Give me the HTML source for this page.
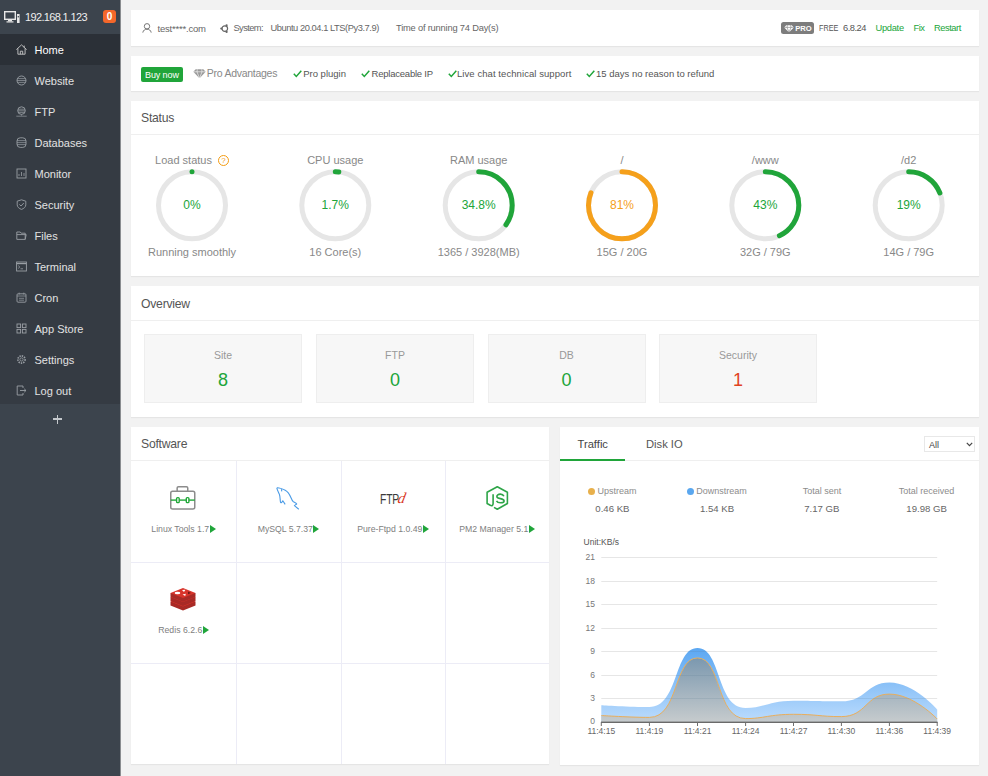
<!DOCTYPE html>
<html><head><meta charset="utf-8">
<style>
*{margin:0;padding:0;box-sizing:border-box}
html,body{width:988px;height:776px;overflow:hidden}
body{background:#f2f2f2;font-family:"Liberation Sans",sans-serif;position:relative;color:#666;line-height:1}
.a{position:absolute;white-space:nowrap;line-height:1}
#side{position:absolute;left:0;top:0;width:120px;height:776px;background:#3c444d}
#side .hd{position:absolute;left:0;top:0;width:120px;height:34px;background:#3c444d}
#side .menu{position:absolute;left:0;top:34px;width:120px;height:370px;background:#353b43}
#side .it{position:absolute;left:0;width:120px;height:31px}
#side .it.cur{background:#2b3037}
#side .it span{position:absolute;left:34.5px;top:11.1px;font-size:11px;color:#e2e2e2;line-height:1}
#side .it.cur span{color:#fff}
#side .it svg{position:absolute;left:16px;top:10px;width:11px;height:11px}
.edge{position:absolute;left:120px;top:0;width:1px;height:776px;background:#8a8d90}
.card{position:absolute;background:#fff;box-shadow:0 1px 1px rgba(0,0,0,0.05)}
.card .ttl{position:absolute;left:10px;font-size:12.2px;color:#555;letter-spacing:-0.24px}
.card .hl{position:absolute;left:0;right:0;height:1px;background:#efefef}
.gr{color:#20a53a}
.t1{font-size:9.3px;color:#666}
.t2{font-size:9.5px;color:#555}
.gt{font-size:11px;color:#888;text-align:center}
.gp{font-size:12px;text-align:center}
.gs{font-size:11px;color:#888;text-align:center}
.ob{width:158px;height:69px;background:#f7f7f7;border:1px solid #eeeeee}
.ol{left:0;width:156px;text-align:center;font-size:10.5px;color:#999}
.ov{left:0;width:156px;text-align:center;font-size:18px}
.vl{background:#ececf6}
.sl{text-align:center;font-size:8.7px;color:#808080}
.tri{display:inline-block;margin-left:0.5px;vertical-align:0px;position:relative;top:0.5px}
.stl{text-align:center;font-size:9px;color:#8c8c8c}
.stv{text-align:center;font-size:9.6px;color:#666}
.dot{display:inline-block;width:7px;height:7px;border-radius:50%;margin-right:2px;vertical-align:-0.5px}
.yl{text-align:right;font-size:8.5px;color:#777}
.xl{text-align:center;font-size:8.5px;color:#666}
</style>
<style>.qi{display:inline-block;width:11px;height:11px;border:1px solid #f39c12;border-radius:50%;color:#f39c12;font-size:8px;line-height:9px;text-align:center;margin-left:6px;vertical-align:1px}</style>
</head>
<body>
<div id="side">
  <div class="hd">
    <svg class="a" style="left:4px;top:11px" width="16" height="12" viewBox="0 0 16 12"><rect x="0.7" y="0.7" width="10.6" height="7.6" fill="none" stroke="#e8e8e8" stroke-width="1.4"/><rect x="4" y="9" width="4" height="1.3" fill="#e8e8e8"/><rect x="2.5" y="10.3" width="7" height="1.2" fill="#e8e8e8"/><rect x="13" y="3" width="2.6" height="9" fill="#e8e8e8"/><rect x="13.7" y="5" width="1.2" height="1.4" fill="#3c444d"/></svg>
    <div class="a" style="left:25px;top:11.7px;font-size:11px;color:#eeeeee;letter-spacing:-0.65px">192.168.1.123</div>
    <div class="a" style="left:103px;top:10px;width:13px;height:13px;border-radius:3px;background:#f4672a;color:#fff;font-size:10px;line-height:13px;text-align:center;font-weight:bold">0</div>
  </div>
  <div class="menu">
    <div class="it cur" style="top:0"><svg viewBox="0 0 11 11"><path d="M0.4 5.6 L5.5 0.9 L10.6 5.6 M1.9 4.4 V10.2 H9.1 V4.4 M4.3 10.2 V7.2 H6.7 V10.2 M8.2 1.6 V3.6" fill="none" stroke="#c8c8c8" stroke-width="0.9"/></svg><span>Home</span></div>
    <div class="it" style="top:31px"><svg viewBox="0 0 11 11"><circle cx="5.5" cy="5.5" r="4.5" fill="none" stroke="#9a9fa5" stroke-width="0.9"/><path d="M1.4 3.6 H9.6 M1 5.5 H10 M1.4 7.4 H9.6" fill="none" stroke="#9a9fa5" stroke-width="0.7"/></svg><span>Website</span></div>
    <div class="it" style="top:62px"><svg viewBox="0 0 11 11"><circle cx="5.5" cy="4.6" r="3.8" fill="none" stroke="#9a9fa5" stroke-width="0.9"/><path d="M2 3.2 H9 M1.8 4.8 H9.2 M2.2 6.4 H8.8 M5.5 8.4 V9.6 M0.3 10.2 H10.7" fill="none" stroke="#9a9fa5" stroke-width="0.7"/></svg><span>FTP</span></div>
    <div class="it" style="top:93px"><svg viewBox="0 0 11 11"><rect x="1" y="0.8" width="9" height="9.6" rx="3.2" fill="none" stroke="#9a9fa5" stroke-width="0.9"/><path d="M1 3.6 H10 M1 5.6 H10 M1 7.6 H10" fill="none" stroke="#9a9fa5" stroke-width="0.7"/></svg><span>Databases</span></div>
    <div class="it" style="top:124px"><svg viewBox="0 0 11 11"><rect x="1" y="1" width="9" height="9" fill="none" stroke="#9a9fa5" stroke-width="0.9"/><path d="M3 8 V6 M5.5 8 V4 M8 8 V5" fill="none" stroke="#9a9fa5" stroke-width="0.8"/></svg><span>Monitor</span></div>
    <div class="it" style="top:155px"><svg viewBox="0 0 11 11"><path d="M5.5 0.8 L9.8 2.2 V5.8 C9.8 8 7.8 9.6 5.5 10.4 C3.2 9.6 1.2 8 1.2 5.8 V2.2 Z" fill="none" stroke="#9a9fa5" stroke-width="0.9"/><path d="M3.4 5.4 L5 7 L7.8 4" fill="none" stroke="#9a9fa5" stroke-width="0.9"/></svg><span>Security</span></div>
    <div class="it" style="top:186px"><svg viewBox="0 0 11 11"><path d="M0.8 2 H4.2 L5.2 3.2 H9.2 V9.4 H0.8 Z M0.8 4.6 H10.2 L9.2 9.4" fill="none" stroke="#9a9fa5" stroke-width="0.9"/></svg><span>Files</span></div>
    <div class="it" style="top:217px"><svg viewBox="0 0 11 11"><rect x="0.6" y="1" width="9.8" height="9" fill="none" stroke="#9a9fa5" stroke-width="0.9"/><path d="M0.6 2.6 H10.4" stroke="#9a9fa5" stroke-width="1.2"/><path d="M2.2 4.6 L3.8 6 L2.2 7.4 M4.5 7.8 H7" fill="none" stroke="#9a9fa5" stroke-width="0.8"/></svg><span>Terminal</span></div>
    <div class="it" style="top:248px"><svg viewBox="0 0 11 11"><rect x="1" y="1.8" width="9" height="8.4" rx="1" fill="none" stroke="#9a9fa5" stroke-width="0.9"/><path d="M1 4 H10 M3.2 0.6 V2.6 M7.8 0.6 V2.6 M3 6.3 H8 M3 8.2 H8" fill="none" stroke="#9a9fa5" stroke-width="0.7"/></svg><span>Cron</span></div>
    <div class="it" style="top:279px"><svg viewBox="0 0 11 11"><rect x="1" y="1" width="3.6" height="3.6" fill="none" stroke="#9a9fa5" stroke-width="0.9"/><rect x="6.4" y="1" width="3.6" height="3.6" fill="none" stroke="#9a9fa5" stroke-width="0.9"/><rect x="1" y="6.4" width="3.6" height="3.6" fill="none" stroke="#9a9fa5" stroke-width="0.9"/><rect x="6.4" y="6.4" width="3.6" height="3.6" fill="none" stroke="#9a9fa5" stroke-width="0.9"/></svg><span>App Store</span></div>
    <div class="it" style="top:310px"><svg viewBox="0 0 11 11"><circle cx="5.5" cy="5.5" r="3.6" fill="none" stroke="#9a9fa5" stroke-width="1.6" stroke-dasharray="1.4 1"/><circle cx="5.5" cy="5.5" r="1.6" fill="none" stroke="#9a9fa5" stroke-width="0.8"/></svg><span>Settings</span></div>
    <div class="it" style="top:341px"><svg viewBox="0 0 11 11"><path d="M7 3 V1 H1.2 V10 H7 V8" fill="none" stroke="#9a9fa5" stroke-width="0.9"/><path d="M4 5.5 H10 M8.2 3.8 L10 5.5 L8.2 7.2" fill="none" stroke="#9a9fa5" stroke-width="0.9"/></svg><span>Log out</span></div>
  </div>
  <div class="a" style="left:52.8px;top:414.5px;width:9px;height:9px"><div class="a" style="left:0;top:3.9px;width:9px;height:1.2px;background:#c4c8cc"></div><div class="a" style="left:3.9px;top:0;width:1.2px;height:9px;background:#c4c8cc"></div></div>
</div>
<div class="edge"></div>
<div class="card" style="left:131px;top:10px;width:848px;height:36px">
  <svg class="a" style="left:10.5px;top:13px" width="10" height="10" viewBox="0 0 10 10"><circle cx="5" cy="3.3" r="2.7" fill="none" stroke="#777" stroke-width="1"/><path d="M0.8 9.6 C1.2 7.2 3 6.2 5 6.2 C7 6.2 8.8 7.2 9.2 9.6" fill="none" stroke="#777" stroke-width="1"/></svg>
  <div class="a t1" style="left:26.5px;top:13.8px;font-size:9.5px;letter-spacing:-0.2px">test****.com</div>
  <svg class="a" style="left:88.5px;top:13.5px" width="9" height="9" viewBox="0 0 9 9"><circle cx="4.8" cy="4.6" r="2.8" fill="none" stroke="#666" stroke-width="1.2"/><circle cx="1.3" cy="4.6" r="1.1" fill="#666"/><circle cx="6.6" cy="1.3" r="1.1" fill="#666"/><circle cx="6.6" cy="7.9" r="1.1" fill="#666"/></svg>
  <div class="a t1" style="left:102.5px;top:13.9px;letter-spacing:-0.6px">System:</div>
  <div class="a t1" style="left:139.5px;top:13.9px;letter-spacing:-0.44px">Ubuntu 20.04.1 LTS(Py3.7.9)</div>
  <div class="a t1" style="left:265px;top:13.9px;letter-spacing:-0.19px">Time of running 74 Day(s)</div>
  <div class="a" style="left:650px;top:11.5px;width:33px;height:12.8px;background:#7d7d7d;border-radius:2.5px">
    <svg class="a" style="left:2.5px;top:3px" width="10" height="7.5" viewBox="0 0 10 7.5"><path d="M0.2 2.4 L2.2 0.2 H7.8 L9.8 2.4 L5 7.4 Z" fill="#fff"/><path d="M0.2 2.4 H9.8 M3.4 0.2 L3 2.4 L5 7.4 L7 2.4 L6.6 0.2" fill="none" stroke="#7d7d7d" stroke-width="0.6"/></svg>
    <div class="a" style="left:14.3px;top:3px;font-size:7.6px;color:#fff;font-weight:bold;letter-spacing:0px">PRO</div>
  </div>
  <div class="a t1" style="left:687.5px;top:13.9px;color:#555;transform:scaleX(0.78);transform-origin:left top">FREE</div>
  <div class="a t1" style="left:712px;top:13.9px;color:#555;letter-spacing:-0.49px">6.8.24</div>
  <div class="a t1" style="color:#20a53a;left:744.5px;top:13.9px;letter-spacing:-0.28px">Update</div>
  <div class="a t1" style="color:#20a53a;left:782.6px;top:13.9px;letter-spacing:-0.5px">Fix</div>
  <div class="a t1" style="color:#20a53a;left:803px;top:13.9px;letter-spacing:-0.44px">Restart</div>
</div>
<div class="card" style="left:131px;top:56px;width:848px;height:35px">
  <div class="a" style="left:10px;top:10.7px;width:42px;height:15px;background:#20a53a;border-radius:2px"><div class="a" style="left:4px;top:4px;font-size:9px;color:#fff;letter-spacing:-0.1px">Buy now</div></div>
  <svg class="a" style="left:61.5px;top:12.6px" width="13" height="9.5" viewBox="0 0 13 9.5"><path d="M0.3 2.8 L2.7 0.3 H10.3 L12.7 2.8 L6.5 9.3 Z" fill="#9a9a9a"/><path d="M0.3 2.8 H12.7 M4.3 0.3 L4 2.8 L6.5 9.3 L9 2.8 L8.7 0.3" fill="none" stroke="#fff" stroke-width="0.6"/></svg>
  <div class="a" style="left:75.8px;top:11.9px;font-size:10.5px;color:#888;letter-spacing:-0.27px">Pro Advantages</div>
  <svg class="a ck" style="left:161.5px;top:14px" width="9" height="7.5" viewBox="0 0 9 7.5"><path d="M0.8 3.8 L3.3 6.4 L8.3 0.8" fill="none" stroke="#20a53a" stroke-width="1.5"/></svg>
  <div class="a t2" style="left:172.2px;top:12.8px">Pro plugin</div>
  <svg class="a ck" style="left:229.5px;top:14px" width="9" height="7.5" viewBox="0 0 9 7.5"><path d="M0.8 3.8 L3.3 6.4 L8.3 0.8" fill="none" stroke="#20a53a" stroke-width="1.5"/></svg>
  <div class="a t2" style="left:240.5px;top:12.8px;letter-spacing:-0.22px">Replaceable IP</div>
  <svg class="a ck" style="left:316.5px;top:14px" width="9" height="7.5" viewBox="0 0 9 7.5"><path d="M0.8 3.8 L3.3 6.4 L8.3 0.8" fill="none" stroke="#20a53a" stroke-width="1.5"/></svg>
  <div class="a t2" style="left:326px;top:12.8px;letter-spacing:0.07px">Live chat technical support</div>
  <svg class="a ck" style="left:455px;top:14px" width="9" height="7.5" viewBox="0 0 9 7.5"><path d="M0.8 3.8 L3.3 6.4 L8.3 0.8" fill="none" stroke="#20a53a" stroke-width="1.5"/></svg>
  <div class="a t2" style="left:465px;top:12.8px">15 days no reason to refund</div>
</div>
<div class="card" style="left:131px;top:101px;width:848px;height:175px">
  <div class="a ttl" style="top:11.4px">Status</div><div class="hl" style="top:33px"></div>
  <svg class="a" style="left:0;top:0" width="848" height="175"><circle cx="61" cy="104.3" r="33.5" fill="none" stroke="#e6e6e6" stroke-width="5"/><circle cx="61" cy="70.8" r="2.5" fill="#20a53a"/><circle cx="204.3" cy="104.3" r="33.5" fill="none" stroke="#e6e6e6" stroke-width="5"/><circle cx="204.3" cy="104.3" r="33.5" fill="none" stroke="#20a53a" stroke-width="5" stroke-linecap="round" stroke-dasharray="3.58 210.49" transform="rotate(-90 204.3 104.3)"/><circle cx="347.7" cy="104.3" r="33.5" fill="none" stroke="#e6e6e6" stroke-width="5"/><circle cx="347.7" cy="104.3" r="33.5" fill="none" stroke="#20a53a" stroke-width="5" stroke-linecap="round" stroke-dasharray="73.25 210.49" transform="rotate(-90 347.7 104.3)"/><circle cx="491" cy="104.3" r="33.5" fill="none" stroke="#e6e6e6" stroke-width="5"/><circle cx="491" cy="104.3" r="33.5" fill="none" stroke="#f5a01b" stroke-width="5" stroke-linecap="round" stroke-dasharray="170.49 210.49" transform="rotate(-90 491 104.3)"/><circle cx="634.3" cy="104.3" r="33.5" fill="none" stroke="#e6e6e6" stroke-width="5"/><circle cx="634.3" cy="104.3" r="33.5" fill="none" stroke="#20a53a" stroke-width="5" stroke-linecap="round" stroke-dasharray="90.51 210.49" transform="rotate(-90 634.3 104.3)"/><circle cx="777.7" cy="104.3" r="33.5" fill="none" stroke="#e6e6e6" stroke-width="5"/><circle cx="777.7" cy="104.3" r="33.5" fill="none" stroke="#20a53a" stroke-width="5" stroke-linecap="round" stroke-dasharray="39.99 210.49" transform="rotate(-90 777.7 104.3)"/></svg>
  <div class="a gt" style="left:-9.0px;top:53.5px;width:140px">Load status<span class="qi">?</span></div>
  <div class="a gp" style="left:-9.0px;top:97.5px;width:140px;color:#20a53a">0%</div>
  <div class="a gs" style="left:-9.0px;top:146px;width:140px">Running smoothly</div>
  <div class="a gt" style="left:134.3px;top:53.5px;width:140px">CPU usage</div>
  <div class="a gp" style="left:134.3px;top:97.5px;width:140px;color:#20a53a">1.7%</div>
  <div class="a gs" style="left:134.3px;top:146px;width:140px">16 Core(s)</div>
  <div class="a gt" style="left:277.7px;top:53.5px;width:140px">RAM usage</div>
  <div class="a gp" style="left:277.7px;top:97.5px;width:140px;color:#20a53a">34.8%</div>
  <div class="a gs" style="left:277.7px;top:146px;width:140px">1365 / 3928(MB)</div>
  <div class="a gt" style="left:421.0px;top:53.5px;width:140px">/</div>
  <div class="a gp" style="left:421.0px;top:97.5px;width:140px;color:#f5a01b">81%</div>
  <div class="a gs" style="left:421.0px;top:146px;width:140px">15G / 20G</div>
  <div class="a gt" style="left:564.3px;top:53.5px;width:140px">/www</div>
  <div class="a gp" style="left:564.3px;top:97.5px;width:140px;color:#20a53a">43%</div>
  <div class="a gs" style="left:564.3px;top:146px;width:140px">32G / 79G</div>
  <div class="a gt" style="left:707.7px;top:53.5px;width:140px">/d2</div>
  <div class="a gp" style="left:707.7px;top:97.5px;width:140px;color:#20a53a">19%</div>
  <div class="a gs" style="left:707.7px;top:146px;width:140px">14G / 79G</div>
</div>
<div class="card" style="left:131px;top:286px;width:848px;height:131px">
  <div class="a ttl" style="top:12.2px">Overview</div><div class="hl" style="top:34px"></div>
  <div class="a ob" style="left:13px;top:48px"><div class="a ol" style="top:14.5px">Site</div><div class="a ov" style="top:36px;color:#20a53a">8</div></div>
  <div class="a ob" style="left:185px;top:48px"><div class="a ol" style="top:14.5px">FTP</div><div class="a ov" style="top:36px;color:#20a53a">0</div></div>
  <div class="a ob" style="left:356.5px;top:48px"><div class="a ol" style="top:14.5px">DB</div><div class="a ov" style="top:36px;color:#20a53a">0</div></div>
  <div class="a ob" style="left:528px;top:48px"><div class="a ol" style="top:14.5px">Security</div><div class="a ov" style="top:36px;color:#e1421f">1</div></div>
</div>
<div class="card" style="left:131px;top:427px;width:418px;height:337px">
  <div class="a ttl" style="top:11.4px">Software</div><div class="hl" style="top:33px"></div>
  <div class="a vl" style="left:105px;top:34px;width:1px;height:303px"></div>
  <div class="a vl" style="left:209.5px;top:34px;width:1px;height:303px"></div>
  <div class="a vl" style="left:314px;top:34px;width:1px;height:303px"></div>
  <div class="a vl" style="left:0;top:135px;width:418px;height:1px"></div>
  <div class="a vl" style="left:0;top:236px;width:418px;height:1px"></div>
  <div class="a" style="left:0px;top:34px;width:105px;height:101px"><svg class="a" style="left:39.3px;top:25.4px" width="26" height="24" viewBox="0 0 26 24"><rect x="7.15" y="0.75" width="10.6" height="5" rx="1.3" fill="none" stroke="#8c8c8c" stroke-width="1.5"/><rect x="0.75" y="5.25" width="24" height="17.8" rx="1.8" fill="#fff" stroke="#8c8c8c" stroke-width="1.5"/><path d="M0.75 14.1 H24.75" stroke="#22a83a" stroke-width="1.4"/><rect x="6.6" y="11.6" width="2.6" height="5" rx="0.9" fill="#fff" stroke="#22a83a" stroke-width="1.4"/><rect x="16.3" y="11.6" width="2.6" height="5" rx="0.9" fill="#fff" stroke="#22a83a" stroke-width="1.4"/></svg><div class="a sl" style="left:0;top:63px;width:105px">Linux Tools 1.7<svg class="tri" width="6" height="8" viewBox="0 0 6 8"><path d="M0 0 L6 4 L0 8 Z" fill="#20a53a"/></svg></div></div>
  <div class="a" style="left:105px;top:34px;width:105px;height:101px"><svg class="a" style="left:40px;top:25px" width="25" height="25" viewBox="0 0 25 25"><path d="M0.8 1.8 C2.5 1.4 5.5 2.4 9.2 4.2 C12 5.6 13.6 8.4 15 11.7 C15.8 13.8 16.2 15 17.4 15.8 C19 16.6 20.4 17.2 20.7 18 L18.4 19.6 L22.8 23.2 M0.8 1.8 C1.2 4 2.6 6.5 3.4 8.4 C4.2 10.5 4 13.5 4.5 16.2 C5 17.2 6 16.5 6.8 14.8 L9.2 18.4 M5.4 3.2 L5.8 5.4" fill="none" stroke="#4a9be6" stroke-width="1.1" stroke-linejoin="round"/></svg><div class="a sl" style="left:0;top:63px;width:105px">MySQL 5.7.37<svg class="tri" width="6" height="8" viewBox="0 0 6 8"><path d="M0 0 L6 4 L0 8 Z" fill="#20a53a"/></svg></div></div>
  <div class="a" style="left:209.5px;top:34px;width:105px;height:101px"><div class="a" style="left:39.8px;top:30.6px;font-size:14px;color:#3a3a3a;letter-spacing:-0.2px;transform:scaleX(0.74);transform-origin:left top">FTP</div><div class="a" style="left:57.5px;top:30px;font-family:'Liberation Serif',serif;font-style:italic;font-size:15px;color:#d8351c;transform:skewX(-12deg)">d</div><div class="a sl" style="left:0;top:63px;width:105px">Pure-Ftpd 1.0.49<svg class="tri" width="6" height="8" viewBox="0 0 6 8"><path d="M0 0 L6 4 L0 8 Z" fill="#20a53a"/></svg></div></div>
  <div class="a" style="left:314px;top:34px;width:104px;height:101px"><svg class="a" style="left:41.2px;top:25.2px" width="24" height="26" viewBox="0 0 24 26"><path d="M8 21.4 L11.3 23.3 L21.4 17.5 V6.3 L11.3 0.7 L1.1 6.3 V17.5 L4.3 19.3 C6 20.2 7.1 19.4 7.1 17.6 V8.2" fill="none" stroke="#2ea548" stroke-width="1.6" stroke-linejoin="round"/><path d="M17.9 10.2 C17.3 8.7 15.8 8.1 14.3 8.1 C12.2 8.1 10.8 9.2 10.9 10.6 C11 11.9 12.4 12.3 14.4 12.6 C16.8 13 18.1 13.6 18.1 14.9 C18.1 16.1 16.6 16.8 14.5 16.8 C12.6 16.8 11.1 16.1 10.5 14.8" fill="none" stroke="#2ea548" stroke-width="1.6"/></svg><div class="a sl" style="left:0;top:63px;width:104px">PM2 Manager 5.1<svg class="tri" width="6" height="8" viewBox="0 0 6 8"><path d="M0 0 L6 4 L0 8 Z" fill="#20a53a"/></svg></div></div>
  <div class="a" style="left:0px;top:135px;width:105px;height:101px"><svg class="a" style="left:39px;top:26px" width="26" height="23" viewBox="0 0 26 23"><path d="M0.5 13.5 V17.5 L13 22.5 L25.5 17.5 V13.5 Z" fill="#a82a26"/><path d="M0.5 13.5 L13 18.5 L25.5 13.5 L13 8.5 Z" fill="#d8342b"/><path d="M0.5 9 V13 L13 18 L25.5 13 V9 Z" fill="#a82a26"/><path d="M0.5 9 L13 14 L25.5 9 L13 4 Z" fill="#d8342b"/><path d="M0.5 5 V8.8 L13 13.8 L25.5 8.8 V5 Z" fill="#a82a26"/><path d="M0.5 5 L13 10 L25.5 5 L13 0 Z" fill="#d8342b"/><ellipse cx="7.5" cy="5" rx="2.8" ry="1.2" fill="#fff"/><path d="M12 2 L15.5 1.8 L14 4 Z M12.5 6.5 L15.8 5.8 L15.2 8 Z" fill="#fff"/><path d="M18 3.5 L21 5 L18 6.2 Z" fill="#6b1a17"/></svg><div class="a sl" style="left:0;top:63px;width:105px">Redis 6.2.6<svg class="tri" width="6" height="8" viewBox="0 0 6 8"><path d="M0 0 L6 4 L0 8 Z" fill="#20a53a"/></svg></div></div>
</div>
<div class="card" style="left:560px;top:427px;width:419px;height:338px">
  <div class="hl" style="top:33px"></div>
  <div class="a" style="left:17.5px;top:11.6px;font-size:11.2px;color:#444">Traffic</div>
  <div class="a" style="left:0;top:32px;width:65px;height:2px;background:#20a53a"></div>
  <div class="a" style="left:86px;top:11.6px;font-size:11.2px;color:#555">Disk IO</div>
  <div class="a" style="left:364px;top:9px;width:51px;height:16px;border:1px solid #e8e8e8;background:#fff"><div class="a" style="left:4px;top:3.5px;font-size:9px;color:#444">All</div><svg class="a" style="left:41px;top:5px" width="7" height="5" viewBox="0 0 7 5"><path d="M0.8 0.8 L3.5 3.6 L6.2 0.8" fill="none" stroke="#444" stroke-width="1.2"/></svg></div>
  <div class="a stl" style="left:-7.6px;top:60.2px;width:120px"><span class="dot" style="background:#e8b04b"></span>Upstream</div>
  <div class="a stv" style="left:-7.6px;top:76.6px;width:120px">0.46 KB</div>
  <div class="a stl" style="left:97.1px;top:60.2px;width:120px"><span class="dot" style="background:#5aa7ef"></span>Downstream</div>
  <div class="a stv" style="left:97.1px;top:76.6px;width:120px">1.54 KB</div>
  <div class="a stl" style="left:201.9px;top:60.2px;width:120px">Total sent</div>
  <div class="a stv" style="left:201.9px;top:76.6px;width:120px">7.17 GB</div>
  <div class="a stl" style="left:306.6px;top:60.2px;width:120px">Total received</div>
  <div class="a stv" style="left:306.6px;top:76.6px;width:120px">19.98 GB</div>
  <div class="a" style="left:23.6px;top:111px;font-size:8.5px;color:#555">Unit:KB/s</div>
</div>
<svg class="a" style="left:0;top:0" width="988" height="776"><defs><linearGradient id="gb" x1="0" y1="0" x2="0" y2="1"><stop offset="0" stop-color="#5ba7f2"/><stop offset="1" stop-color="#bcdcfd"/></linearGradient><linearGradient id="go" x1="0" y1="0" x2="0" y2="1"><stop offset="0" stop-color="#7b98af"/><stop offset="1" stop-color="#c6cbcd"/></linearGradient></defs><path d="M601.3 557.5 H937.2" stroke="#e6e6e6" stroke-width="1"/><path d="M601.3 581.5 H937.2" stroke="#e6e6e6" stroke-width="1"/><path d="M601.3 604.5 H937.2" stroke="#e6e6e6" stroke-width="1"/><path d="M601.3 628.5 H937.2" stroke="#e6e6e6" stroke-width="1"/><path d="M601.3 651.5 H937.2" stroke="#e6e6e6" stroke-width="1"/><path d="M601.3 675.5 H937.2" stroke="#e6e6e6" stroke-width="1"/><path d="M601.3 698.5 H937.2" stroke="#e6e6e6" stroke-width="1"/><path d="M601.30,705.20 C601.30,705.20 630.77,707.00 649.40,707.00 C678.87,707.00 673.57,648.00 697.50,648.00 C721.67,648.00 716.15,708.00 745.60,708.00 C764.15,708.00 769.41,700.70 793.50,700.70 C817.31,700.70 818.31,701.30 841.40,701.30 C866.26,701.30 866.19,682.40 889.40,682.40 C914.09,682.40 937.20,709.40 937.20,709.40 L937.2,722 L601.3,722 Z" fill="url(#gb)"/><path d="M601.30,715.50 C601.30,715.50 630.82,717.40 649.40,717.40 C678.92,717.40 673.60,657.90 697.50,657.90 C721.70,657.90 715.99,718.60 745.60,718.60 C763.99,718.60 769.52,714.30 793.50,714.30 C817.42,714.30 818.63,716.60 841.40,716.60 C866.58,716.60 865.65,694.10 889.40,694.10 C913.55,694.10 937.20,719.00 937.20,719.00 L937.2,722 L601.3,722 Z" fill="url(#go)"/><path d="M601.30,715.50 C601.30,715.50 630.82,717.40 649.40,717.40 C678.92,717.40 673.60,657.90 697.50,657.90 C721.70,657.90 715.99,718.60 745.60,718.60 C763.99,718.60 769.52,714.30 793.50,714.30 C817.42,714.30 818.63,716.60 841.40,716.60 C866.58,716.60 865.65,694.10 889.40,694.10 C913.55,694.10 937.20,719.00 937.20,719.00" fill="none" stroke="#e9ae5c" stroke-width="1"/><clipPath id="cb"><path d="M601.30,705.20 C601.30,705.20 630.77,707.00 649.40,707.00 C678.87,707.00 673.57,648.00 697.50,648.00 C721.67,648.00 716.15,708.00 745.60,708.00 C764.15,708.00 769.41,700.70 793.50,700.70 C817.31,700.70 818.31,701.30 841.40,701.30 C866.26,701.30 866.19,682.40 889.40,682.40 C914.09,682.40 937.20,709.40 937.20,709.40 L937.2,722 L601.3,722 Z"/></clipPath><g clip-path="url(#cb)"><path d="M601.3 557.5 H937.2" stroke="#5a7890" stroke-opacity="0.16" stroke-width="1"/><path d="M601.3 581.5 H937.2" stroke="#5a7890" stroke-opacity="0.16" stroke-width="1"/><path d="M601.3 604.5 H937.2" stroke="#5a7890" stroke-opacity="0.16" stroke-width="1"/><path d="M601.3 628.5 H937.2" stroke="#5a7890" stroke-opacity="0.16" stroke-width="1"/><path d="M601.3 651.5 H937.2" stroke="#5a7890" stroke-opacity="0.16" stroke-width="1"/><path d="M601.3 675.5 H937.2" stroke="#5a7890" stroke-opacity="0.16" stroke-width="1"/><path d="M601.3 698.5 H937.2" stroke="#5a7890" stroke-opacity="0.16" stroke-width="1"/></g><rect x="601" y="721.6" width="336.5" height="1.4" fill="#6a6a6a"/><rect x="600.8" y="722" width="1" height="4" fill="#6e6e6e"/><rect x="648.9" y="722" width="1" height="4" fill="#6e6e6e"/><rect x="697.0" y="722" width="1" height="4" fill="#6e6e6e"/><rect x="745.1" y="722" width="1" height="4" fill="#6e6e6e"/><rect x="793.0" y="722" width="1" height="4" fill="#6e6e6e"/><rect x="840.9" y="722" width="1" height="4" fill="#6e6e6e"/><rect x="888.9" y="722" width="1" height="4" fill="#6e6e6e"/><rect x="936.7" y="722" width="1" height="4" fill="#6e6e6e"/></svg>
<div class="a yl" style="left:565px;top:552.9px;width:30px">21</div>
<div class="a yl" style="left:565px;top:576.9px;width:30px">18</div>
<div class="a yl" style="left:565px;top:599.9px;width:30px">15</div>
<div class="a yl" style="left:565px;top:623.9px;width:30px">12</div>
<div class="a yl" style="left:565px;top:646.9px;width:30px">9</div>
<div class="a yl" style="left:565px;top:670.9px;width:30px">6</div>
<div class="a yl" style="left:565px;top:693.9px;width:30px">3</div>
<div class="a yl" style="left:565px;top:717.4px;width:30px">0</div>
<div class="a xl" style="left:571.3px;top:727px;width:60px">11:4:15</div>
<div class="a xl" style="left:619.4px;top:727px;width:60px">11:4:19</div>
<div class="a xl" style="left:667.5px;top:727px;width:60px">11:4:21</div>
<div class="a xl" style="left:715.6px;top:727px;width:60px">11:4:24</div>
<div class="a xl" style="left:763.5px;top:727px;width:60px">11:4:27</div>
<div class="a xl" style="left:811.4px;top:727px;width:60px">11:4:30</div>
<div class="a xl" style="left:859.4px;top:727px;width:60px">11:4:36</div>
<div class="a xl" style="left:907.2px;top:727px;width:60px">11:4:39</div>
</body></html>
